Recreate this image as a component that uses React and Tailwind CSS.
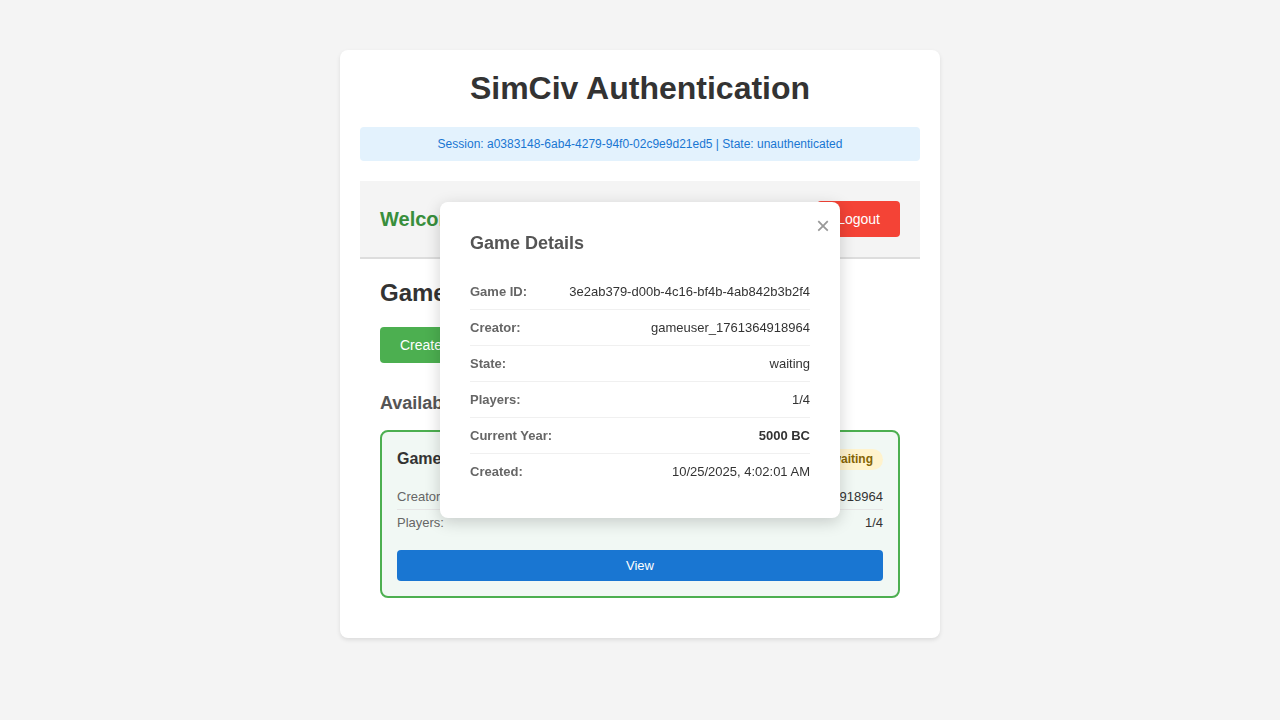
const font = { fontFamily: '"Liberation Sans", Arial, sans-serif' };

const details = [
  { label: "Game ID:", value: "3e2ab379-d00b-4c16-bf4b-4ab842b3b2f4" },
  { label: "Creator:", value: "gameuser_1761364918964" },
  { label: "State:", value: "waiting" },
  { label: "Players:", value: "1/4" },
  { label: "Current Year:", value: "5000 BC", bold: true },
  { label: "Created:", value: "10/25/2025, 4:02:01 AM" },
];

function GameCard() {
  return (
    <div className="rounded-lg border-2 border-[#4caf50] bg-[#f1f8f4] p-[15px]">
      <div className="flex items-center justify-between mb-[13px]">
        <h4 className="text-base font-bold text-[#333]">Game 3e2ab379</h4>
        <span className="rounded-xl bg-[#fff3cd] px-[10px] py-[3px] text-xs font-bold leading-[15px] text-[#856404]">
          waiting
        </span>
      </div>
      <div className="flex justify-between border-b border-[#e6e6e6] py-[5px] text-[13px] leading-[15px]">
        <span className="text-[#666]">Creator:</span>
        <span className="text-[#333]">gameuser_1761364918964</span>
      </div>
      <div className="flex justify-between py-[5px] text-[13px] leading-[15px]">
        <span className="text-[#666]">Players:</span>
        <span className="text-[#333]">1/4</span>
      </div>
      <button className="mt-[15px] h-[31px] w-full rounded bg-[#1976d2] text-[13px] text-white">
        View
      </button>
    </div>
  );
}

function GameDetailsModal() {
  return (
    <div className="fixed inset-0 flex items-center justify-center">
      <div className="relative w-[400px] rounded-lg bg-white px-[30px] pt-[31px] pb-[29px] shadow-[0_4px_16px_rgba(0,0,0,0.18)]">
        <button className="absolute right-[10px] top-[12px] text-2xl leading-none text-[#999]">
          ×
        </button>
        <h3 className="mb-5 text-lg font-bold leading-[21px] text-[#555]">Game Details</h3>
        <div>
          {details.map((d, i) => (
            <div
              key={d.label}
              className={
                "flex justify-between py-[10px] text-[13px] leading-[15px] " +
                (i < details.length - 1 ? "border-b border-[#f0f0f0]" : "")
              }
            >
              <span className="font-bold text-[#666]">{d.label}</span>
              <span className={d.bold ? "font-bold text-[#333]" : "text-[#333]"}>{d.value}</span>
            </div>
          ))}
        </div>
      </div>
    </div>
  );
}

export default function App() {
  return (
    <div className="min-h-screen bg-[#f4f4f4] pt-[50px] pb-10" style={font}>
      <div className="mx-auto w-[600px] rounded-lg bg-white p-5 shadow-[0_2px_4px_rgba(0,0,0,0.1)]">
        <h1 className="text-center text-[32px] font-bold leading-[37px] text-[#333]">
          SimCiv Authentication
        </h1>
        <div className="mt-5 rounded bg-[#e3f2fd] py-[10px] text-center text-xs leading-[14px] text-[#1976d2]">
          Session: a0383148-6ab4-4279-94f0-02c9e9d21ed5 | State: unauthenticated
        </div>

        <div className="mt-5 flex items-center justify-between border-b-2 border-[#ddd] bg-[#f4f4f4] p-5">
          <h2 className="text-xl font-bold text-[#388e3c]">Welcome, gameuser_1761364918964!</h2>
          <button className="h-9 rounded bg-[#f44336] px-5 text-sm text-white">Logout</button>
        </div>

        <div className="p-5">
          <h2 className="text-2xl font-bold leading-7 text-[#333]">Game Lobby</h2>
          <button className="mt-5 h-9 rounded bg-[#4caf50] px-5 text-sm text-white">
            Create New Game
          </button>
          <h3 className="mt-[30px] mb-4 text-lg font-bold leading-[21px] text-[#555]">
            Available Games
          </h3>
          <GameCard />
        </div>
      </div>
      <GameDetailsModal />
    </div>
  );
}
